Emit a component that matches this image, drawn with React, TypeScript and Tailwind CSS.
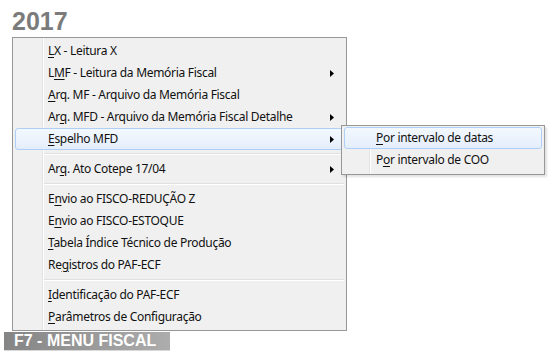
import React from "react";

type Item = { pre: string; key: string; post: string; sub?: boolean; active?: boolean };

const groups: Item[][] = [
  [
    { pre: "", key: "L", post: "X - Leitura X" },
    { pre: "L", key: "M", post: "F - Leitura da Memória Fiscal", sub: true },
    { pre: "", key: "A", post: "rq. MF - Arquivo da Memória Fiscal" },
    { pre: "Ar", key: "q", post: ". MFD - Arquivo da Memória Fiscal Detalhe", sub: true },
    { pre: "", key: "E", post: "spelho MFD", sub: true, active: true },
  ],
  [{ pre: "Ar", key: "q", post: ". Ato Cotepe 17/04", sub: true }],
  [
    { pre: "E", key: "n", post: "vio ao FISCO-REDUÇÃO Z" },
    { pre: "E", key: "n", post: "vio ao FISCO-ESTOQUE" },
    { pre: "", key: "T", post: "abela Índice Técnico de Produção" },
    { pre: "Re", key: "g", post: "istros do PAF-ECF" },
  ],
  [
    { pre: "", key: "I", post: "dentificação do PAF-ECF" },
    { pre: "", key: "P", post: "arâmetros de Configuração" },
  ],
];

const subItems: Item[] = [
  { pre: "", key: "P", post: "or intervalo de datas", active: true },
  { pre: "P", key: "o", post: "r intervalo de COO" },
];

function Arrow() {
  return (
    <svg width="4" height="7" viewBox="0 0 4 7" className="shrink-0">
      <path d="M0 0 L4 3.5 L0 7 Z" fill="#000" />
    </svg>
  );
}

function Row({ item, small }: { item: Item; small?: boolean }) {
  return (
    <div
      className={
        "relative mx-[2px] flex h-[22px] items-center rounded-[3px] border pr-[9px] " +
        (small ? "pl-[31px] " : "pl-[32px] ") +
        (item.active
          ? "border-[#aed0f7] bg-gradient-to-b from-[#f3f8fe] to-[#e4eefb]"
          : "border-transparent")
      }
    >
      <span className="flex-1 whitespace-nowrap text-[12px] tracking-[-0.3px] text-[#111]">
        {item.pre}
        <u className="underline-offset-[2px]">{item.key}</u>
        {item.post}
      </span>
      {item.sub && <Arrow />}
    </div>
  );
}

function Separator() {
  return (
    <div className="flex h-[8px] flex-col justify-center pl-[30px] pr-[2px]">
      <div className="h-px w-full bg-[#e0e0e0]" />
      <div className="h-px w-full bg-white" />
    </div>
  );
}

export default function App() {
  return (
    <div className="relative h-[357px] w-[549px] overflow-hidden bg-white font-['Noto_Sans','Open_Sans',sans-serif]">
      <div className="pl-[12px] pt-[9px] font-['Liberation_Sans',Arial,sans-serif] text-[25px] font-bold leading-[25px] text-[#7b7b7b]">
        2017
      </div>

      {/* menu principal */}
      <div className="relative ml-[12px] mt-[3px] h-[294px] w-[335px] border border-[#979797] bg-[#f0f0f0] py-[2px]">
        <div className="absolute bottom-0 left-[29px] top-0 w-[2px] border-l border-r border-l-[#e2e3e3] border-r-white" />
        {groups.map((g, gi) => (
          <div key={gi}>
            {gi > 0 && <Separator />}
            {g.map((it, i) => (
              <Row key={i} item={it} />
            ))}
          </div>
        ))}

        {/* submenu */}
        <div className="absolute left-[328px] top-[87px] z-10 h-[50px] w-[204px] border border-[#979797] bg-[#f0f0f0] py-[1px] shadow-[2px_2px_2px_rgba(0,0,0,0.12)]">
          <div className="absolute bottom-0 left-[27px] top-0 w-[2px] border-l border-r border-l-[#e2e3e3] border-r-white" />
          {subItems.map((it, i) => (
            <Row key={i} item={it} small />
          ))}
        </div>
      </div>

      {/* rótulo */}
      <div className="ml-[4px] mt-[1px] flex h-[19px] w-[166px] items-center border-b border-[#d8d8d8] bg-gradient-to-r from-[#858585] to-[#adadad] pl-[10px] font-['Liberation_Sans',Arial,sans-serif] text-[16px] font-bold leading-none text-white">
        F7 - MENU FISCAL
      </div>
    </div>
  );
}
